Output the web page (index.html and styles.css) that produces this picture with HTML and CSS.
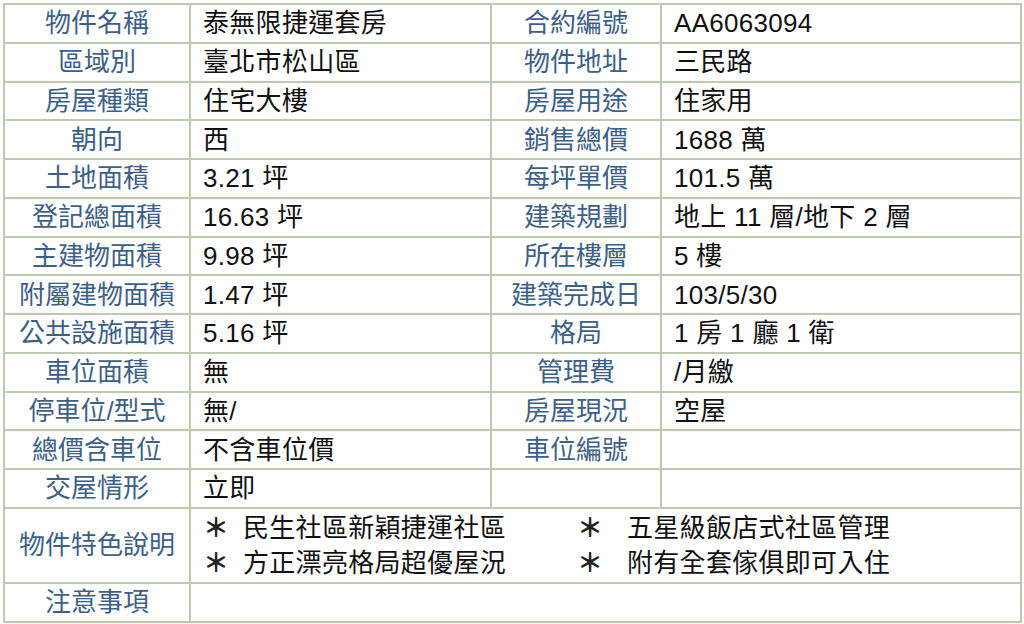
FILE: index.html
```html
<!DOCTYPE html>
<html lang="zh-Hant">
<head>
<meta charset="utf-8">
<title>物件資料</title>
<link rel="stylesheet" href="styles.css">
</head>
<body>
<table class="sheet">
  <colgroup>
    <col class="c1"><col class="c2"><col class="c3"><col class="c4">
  </colgroup>
  <tbody>
    <tr><th>物件名稱</th><td>泰無限捷運套房</td><th>合約編號</th><td>AA6063094</td></tr>
    <tr><th>區域別</th><td>臺北市松山區</td><th>物件地址</th><td>三民路</td></tr>
    <tr><th>房屋種類</th><td>住宅大樓</td><th>房屋用途</th><td>住家用</td></tr>
    <tr><th>朝向</th><td>西</td><th>銷售總價</th><td>1688 萬</td></tr>
    <tr><th>土地面積</th><td>3.21 坪</td><th>每坪單價</th><td>101.5 萬</td></tr>
    <tr><th>登記總面積</th><td>16.63 坪</td><th>建築規劃</th><td>地上 11 層/地下 2 層</td></tr>
    <tr><th>主建物面積</th><td>9.98 坪</td><th>所在樓層</th><td>5 樓</td></tr>
    <tr><th>附屬建物面積</th><td>1.47 坪</td><th>建築完成日</th><td>103/5/30</td></tr>
    <tr><th>公共設施面積</th><td>5.16 坪</td><th>格局</th><td>1 房 1 廳 1 衛</td></tr>
    <tr><th>車位面積</th><td>無</td><th>管理費</th><td>/月繳</td></tr>
    <tr><th>停車位/型式</th><td>無/</td><th>房屋現況</th><td>空屋</td></tr>
    <tr><th>總價含車位</th><td>不含車位價</td><th>車位編號</th><td></td></tr>
    <tr><th>交屋情形</th><td>立即</td><td></td><td></td></tr>
    <tr class="features">
      <th>物件特色說明</th>
      <td colspan="3">
        <div class="feat-grid">
          <div class="feat"><span class="star">＊</span>民生社區新穎捷運社區</div>
          <div class="feat right"><span class="star">＊</span>五星級飯店式社區管理</div>
          <div class="feat"><span class="star">＊</span>方正漂亮格局超優屋況</div>
          <div class="feat right"><span class="star">＊</span>附有全套傢俱即可入住</div>
        </div>
      </td>
    </tr>
    <tr><th>注意事項</th><td colspan="3"></td></tr>
  </tbody>
</table>
</body>
</html>
```

FILE: styles.css
```css
html, body {
  margin: 0;
  padding: 0;
  background: #ffffff;
}
body {
  padding: 3px;
  font-family: "Liberation Sans", "Noto Sans CJK TC", sans-serif;
}
.sheet {
  border-collapse: collapse;
  table-layout: fixed;
  width: 1017px;
  border: 2px solid #b3c2a3;
}
.c1 { width: 186px; }
.c2 { width: 301px; }
.c3 { width: 170px; }
.c4 { width: 360px; }
.sheet th,
.sheet td {
  border: 2px solid #bccab0;
  height: 36.75px;
  padding: 0;
  font-size: 26px;
  line-height: 30px;
  font-weight: normal;
  vertical-align: middle;
}
.sheet th {
  color: #3d6088;
  text-align: center;
  white-space: nowrap;
}
.sheet td {
  color: #111111;
  text-align: left;
  padding-left: 12px;
  letter-spacing: 0.3px;
}
.features th,
.features td {
  height: 73px;
}
.feat-grid {
  display: grid;
  grid-template-columns: 374px auto;
  row-gap: 5px;
}
.feat {
  display: flex;
  align-items: center;
}
.star {
  width: 40px;
  flex: none;
  font-size: 26px;
  font-weight: bold;
  color: #222;
}
.right .star {
  width: 50px;
}
```
